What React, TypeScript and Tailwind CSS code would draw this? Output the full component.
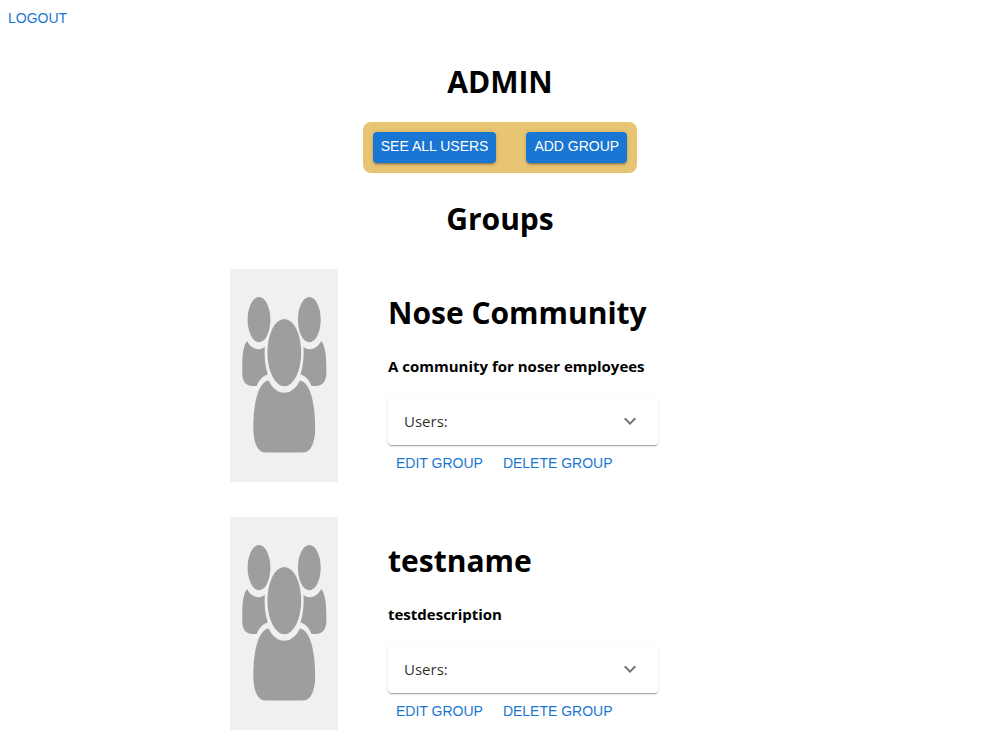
import { useState } from "react";

type Group = { id: number; name: string; description: string };

const groups: Group[] = [
  { id: 1, name: "Nose Community", description: "A community for noser employees" },
  { id: 2, name: "testname", description: "testdescription" },
];

function GroupPicture() {
  return (
    <svg
      viewBox="0 0 108 213"
      preserveAspectRatio="none"
      className="h-[213px] w-1/5 shrink-0 bg-[#f0f0f0]"
      fill="#9e9e9e"
      role="img"
      aria-label="Group"
    >
      <ellipse cx="29" cy="50.7" rx="11.4" ry="22.6" />
      <ellipse cx="79.3" cy="50.7" rx="11.4" ry="22.6" />
      <ellipse cx="54.3" cy="83.6" rx="16.9" ry="33.6" />
      <path d="M17 72C20 77.5 24 80.2 29 80.2C31.3 80.2 33.2 79.2 34.8 77.800C34.2 87 35 97 37.8 105.5C33 106.5 29 111 26.8 117H22C16 117 12.3 112 12.3 105V97C12.3 86 13.5 76 17 72Z" />
      <path d="M91.3 72C88.3 77.5 84.3 80.2 79.3 80.2C77 80.2 75.1 79.2 73.5 77.8C74.1 87 73.3 97 70.5 105.5C75.3 106.5 79.3 111 81.5 117H86.3C92.3 117 96.3 112 96.3 105V97C96.3 86 94.8 76 91.3 72Z" />
      <path d="M38.5 111.5C42.5 119.5 48 123.7 54.3 123.7C60.6 123.7 66 119.5 70 111.5C80 113 85.2 134 85.2 158C85.2 174 81 183.5 73 183.5H35.5C27.5 183.5 23.3 174 23.3 158C23.3 134 28.5 113 38.5 111.5Z" />
    </svg>
  );
}

function UsersAccordion({ id }: { id: number }) {
  const [open, setOpen] = useState(false);
  return (
    <div className="rounded bg-white shadow-[0_2px_1px_-1px_rgba(0,0,0,0.2),0_1px_1px_0_rgba(0,0,0,0.14),0_1px_3px_0_rgba(0,0,0,0.12)]">
      <button
        type="button"
        aria-expanded={open}
        aria-controls={`users-${id}`}
        onClick={() => setOpen(!open)}
        className="flex h-12 w-full items-center justify-between px-4 text-left text-[15px] text-black/85"
      >
        <span>Users:</span>
        <svg viewBox="0 0 24 24" className="size-6 fill-black/54" aria-hidden="true">
          <path d="M16.59 8.59 12 13.17 7.41 8.59 6 10l6 6 6-6z" />
        </svg>
      </button>
      <div id={`users-${id}`} hidden={!open} className="px-4 pb-4" />
    </div>
  );
}

function GroupCard({ group }: { group: Group }) {
  return (
    <li className="flex gap-[50px]">
      <GroupPicture />
      <div className="flex w-1/2 flex-col">
        <h2 className="mt-[22px] text-[30px] leading-[43px] font-bold whitespace-nowrap">{group.name}</h2>
        <p className="mt-[22px] text-[15px] leading-[21px] font-bold whitespace-nowrap">{group.description}</p>
        <div className="mt-5">
          <UsersAccordion id={group.id} />
        </div>
        <div className="mt-1 flex gap-5 px-2 font-['Liberation_Sans',sans-serif] text-sm leading-7 text-[#1976d2]">
          <button type="button">EDIT GROUP</button>
          <button type="button">DELETE GROUP</button>
        </div>
      </div>
    </li>
  );
}

const contained =
  "h-[31px] rounded bg-[#1976d2] px-2 pb-1 font-['Liberation_Sans',sans-serif] text-sm text-white shadow-[0_3px_1px_-2px_rgba(0,0,0,0.2),0_2px_2px_0_rgba(0,0,0,0.14),0_1px_5px_0_rgba(0,0,0,0.12)]";

export default function App() {
  return (
    <div className="bg-white font-['Open_Sans',sans-serif] text-black">
      <header className="flex px-2 pt-2">
        <button type="button" className="font-['Liberation_Sans',sans-serif] text-sm text-[#1976d2]">
          LOGOUT
        </button>
      </header>
      <main className="flex flex-col items-center pt-8 pb-6">
        <h1 className="text-[30px] leading-[43px] font-bold">ADMIN</h1>
        <nav className="mt-[19px] flex gap-[30px] rounded-lg bg-[#e7c573] p-[10px]">
          <button type="button" className={contained}>SEE ALL USERS</button>
          <button type="button" className={contained}>ADD GROUP</button>
        </nav>
        <h1 className="mt-6 text-[30px] leading-[43px] font-bold">Groups</h1>
        <ul className="mt-[29px] flex w-full max-w-[540px] flex-col gap-[35px]">
          {groups.map((group) => (
            <GroupCard key={group.id} group={group} />
          ))}
        </ul>
      </main>
    </div>
  );
}
